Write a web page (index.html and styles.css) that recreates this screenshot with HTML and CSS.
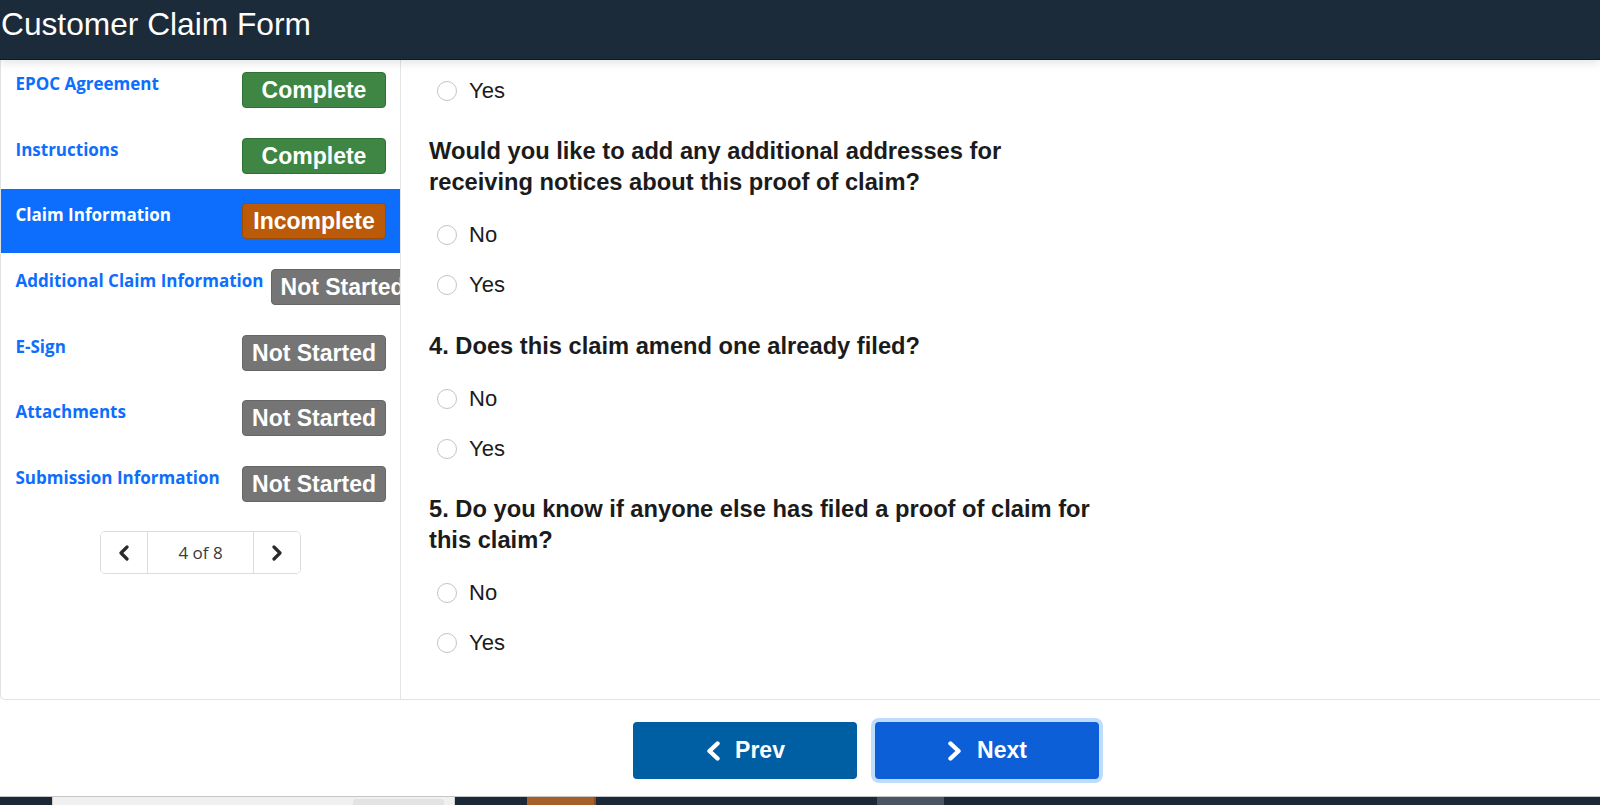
FILE: index.html
```html
<!DOCTYPE html>
<html lang="en">
<head>
<meta charset="utf-8">
<title>Customer Claim Form</title>
<link rel="stylesheet" href="styles.css">
</head>
<body>
<header class="topbar">
  <h1 class="title">Customer Claim Form</h1>
</header>

<main class="card">
  <nav class="sidebar">
    <ul class="steps">
      <li class="step"><span class="step-label">EPOC Agreement</span><span class="badge badge-complete">Complete</span></li>
      <li class="step"><span class="step-label">Instructions</span><span class="badge badge-complete">Complete</span></li>
      <li class="step step-active"><span class="step-label">Claim Information</span><span class="badge badge-incomplete">Incomplete</span></li>
      <li class="step"><span class="step-label">Additional Claim Information</span><span class="badge badge-idle">Not Started</span></li>
      <li class="step"><span class="step-label">E-Sign</span><span class="badge badge-idle">Not Started</span></li>
      <li class="step"><span class="step-label">Attachments</span><span class="badge badge-idle">Not Started</span></li>
      <li class="step"><span class="step-label">Submission Information</span><span class="badge badge-idle">Not Started</span></li>
    </ul>
    <div class="pager">
      <button class="pager-btn" aria-label="Previous step">
        <svg width="12" height="16" viewBox="0 0 12 16"><polyline points="9,2 3,8 9,14" fill="none" stroke="#2b2b2b" stroke-width="3.2" stroke-linecap="round" stroke-linejoin="round"/></svg>
      </button>
      <span class="pager-count">4 of 8</span>
      <button class="pager-btn" aria-label="Next step">
        <svg width="12" height="16" viewBox="0 0 12 16"><polyline points="3,2 9,8 3,14" fill="none" stroke="#2b2b2b" stroke-width="3.2" stroke-linecap="round" stroke-linejoin="round"/></svg>
      </button>
    </div>
  </nav>

  <section class="content">
    <div class="option"><input class="radio" type="radio" name="q2" id="q2y"><label for="q2y">Yes</label></div>

    <h2 class="question">Would you like to add any additional addresses for receiving notices about this proof of claim?</h2>
    <div class="option"><input class="radio" type="radio" name="q3" id="q3n"><label for="q3n">No</label></div>
    <div class="option"><input class="radio" type="radio" name="q3" id="q3y"><label for="q3y">Yes</label></div>

    <h2 class="question">4. Does this claim amend one already filed?</h2>
    <div class="option"><input class="radio" type="radio" name="q4" id="q4n"><label for="q4n">No</label></div>
    <div class="option"><input class="radio" type="radio" name="q4" id="q4y"><label for="q4y">Yes</label></div>

    <h2 class="question">5. Do you know if anyone else has filed a proof of claim for this claim?</h2>
    <div class="option"><input class="radio" type="radio" name="q5" id="q5n"><label for="q5n">No</label></div>
    <div class="option"><input class="radio" type="radio" name="q5" id="q5y"><label for="q5y">Yes</label></div>
  </section>
</main>

<div class="actions">
  <button class="btn btn-prev">
    <svg width="16" height="20" viewBox="0 0 16 20"><polyline points="12.5,2.5 4.5,10 12.5,17.5" fill="none" stroke="#fff" stroke-width="4.4" stroke-linecap="round" stroke-linejoin="round"/></svg>
    <span>Prev</span>
  </button>
  <button class="btn btn-next">
    <svg width="16" height="20" viewBox="0 0 16 20"><polyline points="3.5,2.5 11.5,10 3.5,17.5" fill="none" stroke="#fff" stroke-width="4.4" stroke-linecap="round" stroke-linejoin="round"/></svg>
    <span>Next</span>
  </button>
</div>

<footer class="taskbar">
  <div class="tb tb-navy tb-a"></div>
  <div class="tb tb-light"><div class="tb-tab"></div></div>
  <div class="tb tb-navy tb-b"></div>
  <div class="tb tb-orange"></div>
  <div class="tb tb-navy tb-c"></div>
  <div class="tb tb-gray"></div>
  <div class="tb tb-navy tb-rest"></div>
</footer>
</body>
</html>
```

FILE: styles.css
```css
* { box-sizing: border-box; }

html, body { margin: 0; padding: 0; }

body {
  height: 805px;
  overflow: hidden;
  display: flex;
  flex-direction: column;
  background: #fff;
  color: #1b1b1b;
  font-family: "Liberation Sans", Arial, sans-serif;
}

/* Header */
.topbar {
  flex-shrink: 0;
  height: 60px;
  padding-top: 9px;
  background: #1c2b3a;
  border-bottom: 1px solid #0f1826;
  box-shadow: 0 2px 10px rgba(0, 0, 0, 0.13);
  position: relative;
  z-index: 1;
}

.title {
  margin: 0;
  padding-left: 1px;
  font-size: 31.7px;
  line-height: 31.7px;
  font-weight: 400;
  color: #fff;
}

/* Card */
.card {
  flex-shrink: 0;
  height: 640px;
  display: flex;
  border: 1px solid #e2e2e2;
  border-top: 0;
  border-right: 0;
  border-radius: 0 0 0 5px;
  overflow: hidden;
}

.sidebar {
  flex: 0 0 400px;
  border-right: 1px solid #e4e4e4;
  overflow: hidden;
}

.steps {
  list-style: none;
  margin: -2px 0 0;
  padding: 0;
}

.step {
  height: 64px;
  margin-bottom: 1.67px;
  padding: 14px 14px 0 14.5px;
  display: flex;
  align-items: flex-start;
  gap: 7px;
}

.step-label {
  flex-shrink: 0;
  white-space: nowrap;
  font-family: "Open Sans", "Liberation Sans", sans-serif;
  font-weight: 700;
  font-size: 17px;
  line-height: 23px;
  color: #0d6efd;
}

.step-active { background: #0d6efd; }
.step-active .step-label { color: #fff; }

.badge {
  flex: 0 0 144px;
  margin-left: auto;
  height: 36px;
  border: 1px solid;
  border-radius: 4px;
  text-align: center;
  font-family: "Liberation Sans", Arial, sans-serif;
  font-weight: 700;
  font-size: 23px;
  line-height: 34px;
  color: #fff;
  white-space: nowrap;
}

.badge-complete { background: #3f8543; border-color: #2f7034; }
.badge-incomplete { background: #bb5a08; border-color: #9d4a02; }
.badge-idle { background: #757575; border-color: #666; }

/* Pager */
.pager {
  width: 201px;
  height: 43px;
  margin: 15.5px auto 0;
  display: grid;
  grid-template-columns: 46px 1fr 46px;
  border: 1px solid #dcdcdc;
  border-radius: 5px;
  overflow: hidden;
}

.pager-btn {
  border: 0;
  padding: 0;
  background: #fff;
  display: flex;
  align-items: center;
  justify-content: center;
}

.pager-count {
  display: flex;
  align-items: center;
  justify-content: center;
  border-left: 1px solid #dcdcdc;
  border-right: 1px solid #dcdcdc;
  font-family: "Open Sans", "Liberation Sans", sans-serif;
  font-size: 17px;
  color: #3a3a3a;
}

/* Content */
.content {
  flex: 1;
  padding: 5.5px 0 0 28px;
}

.option {
  height: 50px;
  padding-left: 8px;
  display: flex;
  align-items: center;
  gap: 12px;
  font-size: 22px;
  color: #1b1b1b;
}

.radio {
  appearance: none;
  -webkit-appearance: none;
  margin: 0;
  width: 20px;
  height: 20px;
  border: 1px solid #c4c4c4;
  border-radius: 50%;
  background: #fff;
  flex-shrink: 0;
}

.question {
  margin: 20.5px 0 12.5px;
  max-width: 672px;
  font-size: 23.7px;
  line-height: 30.8px;
  font-weight: 700;
  color: #1b1b1b;
}

/* Action buttons */
.actions {
  flex-shrink: 0;
  height: 96px;
  padding: 22px 0 0 132px;
  display: flex;
  justify-content: center;
  align-items: flex-start;
  gap: 18px;
}

.btn {
  width: 224px;
  height: 57px;
  border: 0;
  border-radius: 4px;
  display: inline-flex;
  align-items: center;
  justify-content: center;
  gap: 14px;
  font-family: "Liberation Sans", Arial, sans-serif;
  font-weight: 700;
  font-size: 23px;
  color: #fff;
}

.btn-prev { background: #005ea2; }
.btn-next {
  background: #0c5fd7;
  box-shadow: 0 0 0 4px #c0dcfd;
}

/* Bottom strip */
.taskbar {
  flex: 1;
  display: flex;
  border-top: 1px solid #c6c6c6;
  background: #1b2838;
}

.tb { height: 100%; }
.tb-a { width: 52px; }
.tb-light {
  width: 403px;
  background: #f0f0f0;
  border-left: 1px solid #cfcfcf;
  border-right: 1px solid #cfcfcf;
  padding: 2px 0 0 300px;
}
.tb-tab {
  width: 91px;
  height: 100%;
  background: #e3e3e3;
  border-radius: 3px 3px 0 0;
}
.tb-b { width: 72px; }
.tb-orange { width: 69px; background: #a65f27; border-right: 2px solid #8a4a1c; }
.tb-c { width: 281px; }
.tb-gray { width: 67px; background: #4a5563; }
.tb-rest { flex: 1; }
```
